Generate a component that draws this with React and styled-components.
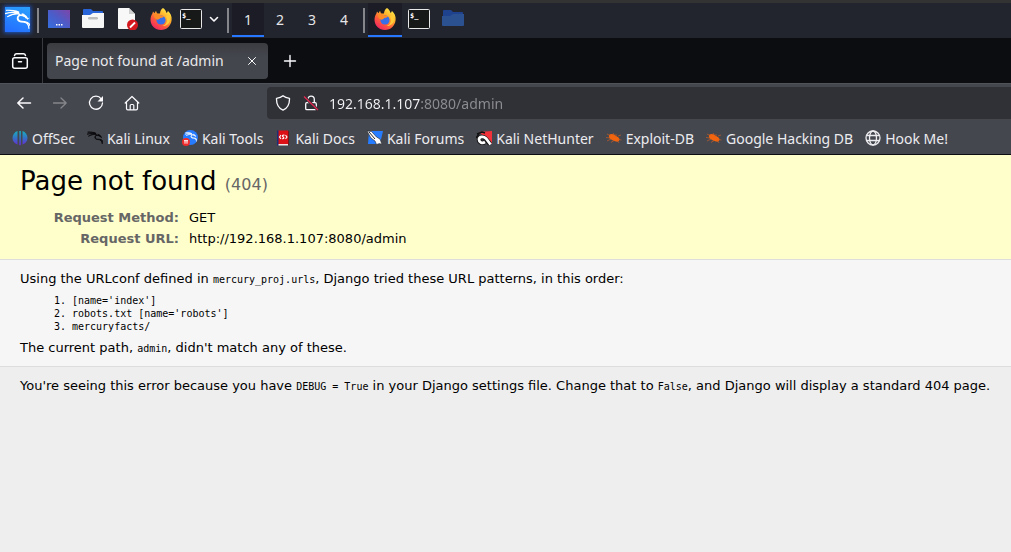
import React from "react";
import styled, { createGlobalStyle } from "styled-components";
import { SiKalilinux } from "react-icons/si";

const GlobalStyle = createGlobalStyle`
  * { box-sizing: border-box; }
  html { min-height: 100%; background: #eeeeee; }
  body { margin: 0; color: #000; font: 13px "DejaVu Sans", sans-serif; }
  button { border: 0; padding: 0; background: none; color: inherit; font: inherit; }
`;

const Chrome = styled.div`
  color: #fbfbfe;
  font: 14px "Noto Sans", sans-serif;
`;

const Panel = styled.header`
  display: flex;
  align-items: stretch;
  height: 38px;
  padding: 0 0 1px 4px;
  background: #23252e;
  border-top: 3px solid #333333;
`;

const Launcher = styled.button`
  display: flex;
  align-items: center;
  justify-content: center;
  width: ${(p) => p.$width || 34}px;
  background: ${(p) => (p.$active ? "#1b1c25" : "transparent")};
  border-bottom: 2px solid ${(p) => (p.$active ? "#2777ff" : "transparent")};
`;

const Workspace = styled(Launcher)`
  font-size: 14px;
  color: #e6e6e8;
`;

const Separator = styled.span`
  width: 2px;
  margin: 5px ${(p) => p.$right || 3}px 4px ${(p) => p.$left || 3}px;
  background: #85868b;
`;

const KaliTile = styled.span`
  display: flex;
  align-items: center;
  justify-content: center;
  width: 25px;
  height: 25px;
  color: #fff;
  background: linear-gradient(200deg, #2aa0ff, #246cff);
  box-shadow: 0 0 4px 1px #1d56c4;
`;

const Dragon = styled(SiKalilinux)`
  flex: none;
  stroke: currentColor;
  stroke-width: 1;
`;

const TabStrip = styled.div`
  display: flex;
  align-items: center;
  height: 45px;
  background: #0c0d11;
`;

const TabOverview = styled.button`
  display: flex;
  align-items: center;
  justify-content: center;
  align-self: stretch;
  width: 43px;
  padding-right: 3px;
  border-right: 1px solid #3a3b40;
`;

const Tab = styled.div`
  display: flex;
  align-items: center;
  justify-content: space-between;
  width: 221px;
  height: 36px;
  margin-left: 4px;
  padding: 0 8px;
  border-radius: 4px;
  background: linear-gradient(#3b3c40, #44464e 14px);
`;

const TabTitle = styled.button`
  color: #e8e8ea;
`;

const IconButton = styled.button`
  display: flex;
  align-items: center;
  justify-content: center;
  width: ${(p) => p.$width || 36}px;
  height: 32px;
  color: ${(p) => (p.$dim ? "#85868b" : "#fbfbfe")};
`;

const CloseButton = styled(IconButton)`
  width: 16px;
`;

const NewTab = styled(IconButton)`
  margin-left: 4px;
`;

const Toolbar = styled.nav`
  display: flex;
  align-items: center;
  height: 39px;
  padding-left: 6px;
  background: #45474f;
  border-top: 1px solid #51535b;
`;

const AddressBar = styled.label`
  display: flex;
  flex: 1;
  align-items: center;
  gap: 12px;
  height: 32px;
  margin-left: 117px;
  padding-left: 8px;
  border-radius: 4px 0 0 4px;
  background: #303136;
`;

const Address = styled.input`
  flex: 1;
  min-width: 0;
  margin-left: -2px;
  padding: 0;
  border: 0;
  outline: 0;
  font: 14px "Noto Sans", sans-serif;
  color: transparent;
  background: linear-gradient(to right, #f4f4f6 ${(p) => p.$hostWidth}px, #8d8e93 ${(p) => p.$hostWidth}px);
  background-clip: text;
  -webkit-background-clip: text;
`;

const Bookmarks = styled.nav`
  display: flex;
  gap: 12px;
  height: 33px;
  padding: 0 12px;
  overflow: hidden;
  background: #45474f;
  border-bottom: 1px solid #0c0d11;
`;

const Bookmark = styled.a`
  display: flex;
  align-items: center;
  gap: 4px;
  color: #ececef;
  text-decoration: none;
  white-space: nowrap;
`;

const Section = styled.section`
  padding: 10px 20px;
  background: ${(p) => p.$bg};
  border-bottom: ${(p) => (p.$last ? "0" : "1px solid #dddddd")};
`;

const Title = styled.h1`
  margin: 0 0 6px;
  font-size: 26px;
  font-weight: normal;
  line-height: 32px;
`;

const Status = styled.span`
  font-size: 16px;
  color: #666666;
`;

const Meta = styled.table`
  width: 100%;
  border-collapse: collapse;
  line-height: 15px;

  th, td { padding: 3px; vertical-align: top; text-align: left; }
  th { width: 166px; padding-right: 7px; color: #666666; text-align: right; }
`;

const Text = styled.p`
  margin: 0;
  line-height: 17px;
`;

const Code = styled.code`
  font: 10px "DejaVu Sans Mono", monospace;
`;

const Patterns = styled.ol`
  margin: 7px 0 6px;
  padding-left: 52px;
  font: 10px/13px "DejaVu Sans Mono", monospace;
`;

const Svg = ({ size = 16, box = 16, children, ...rest }) => (
  <svg width={size} height={size} viewBox={`0 0 ${box} ${box}`} fill="none" aria-hidden="true" {...rest}>
    {children}
  </svg>
);

const line = { stroke: "currentColor", strokeWidth: 1.3, strokeLinecap: "round", strokeLinejoin: "round" };

const DesktopIcon = () => (
  <Svg size={22} box={22}>
    <defs>
      <linearGradient id="desk" x1="0" y1="1" x2="1" y2="0">
        <stop offset="0" stopColor="#356fe0" /><stop offset=".5" stopColor="#4c5cc8" /><stop offset="1" stopColor="#7d45a8" />
      </linearGradient>
    </defs>
    <path d="M0 2h22v18H0z" fill="url(#desk)" />
    <path d="M8 16h1.5v1.500H8zM10.500 16H12v1.500h-1.500zM13 16h1.500v1.500H13z" fill="#fff" />
  </Svg>
);

const FilesIcon = () => (
  <Svg size={22} box={22}>
    <path d="M1 2q0-1 1-1h7l2 2h9q1 0 1 1v6H1z" fill="#2863d8" />
    <path d="M0 7h8l3-2h11v14q0 1-1 1H1q-1 0-1-1z" fill="#f6f6f6" />
    <rect x="6" y="9" width="10" height="2.500" rx="1.200" fill="#bdbdbd" />
  </Svg>
);

const DocumentIcon = () => (
  <Svg size={22} box={22}>
    <path d="M3 0h10l6 6v14q0 1-1 1H3q-1 0-1-1V1q0-1 1-1z" fill="#f8f8f8" />
    <path d="M13 0l6 6h-6z" fill="#cfcfcf" />
    <circle cx="16.500" cy="17" r="5.500" fill="#d3191f" />
    <path d="M14 19.500l5-5" stroke="#fff" strokeWidth="1.800" />
  </Svg>
);

const FirefoxIcon = ({ id }) => (
  <Svg size={22} box={22}>
    <defs>
      <linearGradient id={id} x1=".85" y1=".05" x2=".2" y2="1">
        <stop offset="0" stopColor="#fff04a" /><stop offset=".35" stopColor="#ffad2a" />
        <stop offset=".65" stopColor="#ff5a3c" /><stop offset="1" stopColor="#ee1f68" />
      </linearGradient>
    </defs>
    <path d="M13 0c2 1 3 3 3.500 5 1-.6 1.300-1.500 1.300-2.200C20.500 5 22 8.500 21.600 12 21 18 16.500 22 11 22 5 22 .5 17.500.5 11.800.5 9 1.300 7 2.500 5.200L3 3.500l1.500 1.700L6 2.700l1 2.700 3 .2C10 3.500 11 1 13 0z" fill={`url(#${id})`} />
    <circle cx="11" cy="12" r="4.600" fill="#386fe8" />
    <path d="M4 7c2-1.800 5-1.300 6.500.5L14 8c-.5 1.500-2 1.800-3.700 2-.6 1-1.800 1.300-2.800 1.800C5 11 4 9.500 4 7z" fill="#ff8b26" />
    <path d="M13 6c2 .6 4 2.700 4 6 0 3-2 5.500-5 6 5 .4 8-3 8-7 0-2-.7-4-2-5 0 2-1 2.500-2 2-.8-.3-1.500-1.300-3-2z" fill="#ffcc38" />
  </Svg>
);

const TerminalIcon = () => (
  <Svg size={22} box={22}>
    <rect x=".5" y="1.500" width="21" height="19" rx="1" fill="#171818" stroke="#e8e8e8" />
    <text x="2" y="10" fill="#fff" fontFamily="DejaVu Sans Mono, monospace" fontSize="7" fontWeight="bold">$_</text>
  </Svg>
);

const FolderIcon = () => (
  <Svg size={22} box={22}>
    <path d="M1 3q0-1 1-1h7l2 2h9q1 0 1 1v4H1z" fill="#1f428f" />
    <path d="M0 8h8l3-2h11v11q0 1-1 1H1q-1 0-1-1z" fill="#2b5191" />
  </Svg>
);

const OffSecIcon = () => (
  <Svg>
    <defs>
      <linearGradient id="offsec" x1="0" y1="0" x2="0" y2="1">
        <stop offset="0" stopColor="#18afbf" /><stop offset=".5" stopColor="#356fc5" /><stop offset="1" stopColor="#6b27d9" />
      </linearGradient>
    </defs>
    <path d="M5.500 1v13.500C2.500 13.500.5 11 .5 8s2-6 5-7zM7.300 1h1.600v14.500L8 14.700l-.7.800zM10.500 1c3 1 5 4 5 7s-2 5.500-5 6.500z" fill="url(#offsec)" />
  </Svg>
);

const ToolsIcon = () => (
  <Svg>
    <circle cx="8.500" cy="7.500" r="7.500" fill="#277bff" />
    <g transform="translate(3 1)" color="#fff"><Dragon size={12} /></g>
    <circle cx="4" cy="12" r="4" fill="#f02b2b" />
    <path d="M2 10.700h4M3 10.700v3M5 10.700v3" stroke="#fff" />
  </Svg>
);

const DocsIcon = () => (
  <Svg>
    <path d="M3 .5h10v14H3z" fill="#dc1015" />
    <path d="M2 .5h1.500v15H2z" fill="#1b2f78" />
    <path d="M3.500 14h9.500v1.500H3.500z" fill="#f0e4e4" />
    <path d="M13 1h1v14h-1z" fill="#76151a" />
    <path d="M6 5.200L4.500 7 6 8.800M10.500 5.200L12 7l-1.500 1.800M9.500 5.300C7.500 4.700 6.800 6 8 6.800s1.500 2.200-1 1.900" stroke="#fff" strokeWidth="1.100" />
  </Svg>
);

const ForumsIcon = () => (
  <Svg>
    <path d="M2 1h14l-3 13H1z" fill="#267cff" />
    <path d="M0 1l4.500.5 5 5.500 3.500 2 2 5.500-2.500-1-3 1L8 11 4 8z" fill="#fff" stroke="#222" strokeWidth=".6" />
    <path d="M2 2l6 7" stroke="#222" strokeWidth="1" />
  </Svg>
);

const NetHunterIcon = () => (
  <Svg>
    <path d="M3 2l13-1v13z" fill="#f2323b" />
    <path d="M1 4l5-2 3 1M0 8l3-4" stroke="#111" strokeWidth="1.400" />
    <path d="M14 14L9.500 8.500C7 6 3 7 3 9.500S6 14 9 12" stroke="#111" strokeWidth="4.500" />
    <path d="M14.500 14.500L10 8.500C7 5.500 3 7 3 9.500S6 14 9 12" stroke="#fff" strokeWidth="2.800" />
  </Svg>
);

const BugIcon = () => (
  <Svg>
    <path d="M3 5c2-2 5-1 7 1 2 1 3.500 2 3.500 3.500S12 12 10 11.500 3 9 3 7z" fill="#f2640d" />
    <path d="M1 4l4 2M0 7.500l4 .5M1 11l4-2M5 12.500l3-2M7 3l2 3M10 4v3M12 6l3-1M12.500 9.500l3 .5M11 10l2 3" stroke="#d9601b" strokeWidth=".6" />
  </Svg>
);

const GlobeIcon = () => (
  <Svg>
    <g stroke="currentColor" strokeWidth="1.300">
      <circle cx="8" cy="8" r="7" /><ellipse cx="8" cy="8" rx="3.500" ry="7" /><path d="M1.500 5.500h13M1.500 10.500h13" />
    </g>
  </Svg>
);

const bookmarks = [
  ["OffSec", <OffSecIcon />],
  ["Kali Linux", <Dragon size={16} color="#08080a" />],
  ["Kali Tools", <ToolsIcon />],
  ["Kali Docs", <DocsIcon />],
  ["Kali Forums", <ForumsIcon />],
  ["Kali NetHunter", <NetHunterIcon />],
  ["Exploit-DB", <BugIcon />],
  ["Google Hacking DB", <BugIcon />],
  ["Hook Me!", <GlobeIcon />],
];

export default function App() {
  return (
    <>
      <GlobalStyle />
      <Chrome>
        <Panel>
          <Launcher $width={26} aria-label="Applications"><KaliTile><Dragon size={25} /></KaliTile></Launcher>
          <Separator $left={7} />
          <Launcher aria-label="Show desktop"><DesktopIcon /></Launcher>
          <Launcher aria-label="Files"><FilesIcon /></Launcher>
          <Launcher aria-label="Text editor"><DocumentIcon /></Launcher>
          <Launcher aria-label="Firefox"><FirefoxIcon id="fox-launch" /></Launcher>
          <Launcher $width={26} aria-label="Terminal"><TerminalIcon /></Launcher>
          <Launcher $width={20} aria-label="More terminals">
            <Svg size={10} box={10}><path d="M1.500 3.500L5 7l3.500-3.500" {...line} strokeWidth="1.600" /></Svg>
          </Launcher>
          <Separator />
          <Workspace $width={32} $active>1</Workspace>
          <Workspace $width={32}>2</Workspace>
          <Workspace $width={32}>3</Workspace>
          <Workspace $width={32}>4</Workspace>
          <Separator />
          <Launcher $active aria-label="Firefox window"><FirefoxIcon id="fox-window" /></Launcher>
          <Launcher aria-label="Terminal window"><TerminalIcon /></Launcher>
          <Launcher aria-label="Files window"><FolderIcon /></Launcher>
        </Panel>

        <TabStrip>
          <TabOverview aria-label="Firefox View">
            <Svg size={18} box={18}>
              <rect x="1.700" y="5.700" width="14.600" height="10.600" rx="2" {...line} strokeWidth="1.500" />
              <path d="M3.500 3.500Q4 1.700 5.500 1.700h7q1.500 0 2 1.800M7.500 9.700h3" {...line} strokeWidth="1.500" />
            </Svg>
          </TabOverview>
          <Tab>
            <TabTitle>Page not found at /admin</TabTitle>
            <CloseButton aria-label="Close tab">
              <Svg><path d="M4.500 4.500l7 7M11.500 4.500l-7 7" {...line} strokeWidth="1" /></Svg>
            </CloseButton>
          </Tab>
          <NewTab aria-label="New tab">
            <Svg><path d="M8 2.500v11M2.500 8h11" {...line} strokeWidth="1.400" /></Svg>
          </NewTab>
        </TabStrip>

        <Toolbar aria-label="Navigation">
          <IconButton aria-label="Back"><Svg><path d="M14.500 8H1.800M7 3L1.800 8 7 13" {...line} strokeWidth="1.500" /></Svg></IconButton>
          <IconButton $dim aria-label="Forward"><Svg><path d="M1.500 8h12.700M9 3l5.200 5L9 13" {...line} /></Svg></IconButton>
          <IconButton aria-label="Reload">
            <Svg><path d="M13.200 3.800A6.500 6.500 0 1 0 14.500 8" {...line} strokeWidth="1.300" /><path d="M15 1v5.500H9.500z" fill="currentColor" /></Svg>
          </IconButton>
          <IconButton aria-label="Home">
            <Svg><path d="M1.200 8L8 1.500 14.800 8M2.500 7.500v6q0 1.300 1.300 1.300h8.400q1.300 0 1.300-1.300v-6M6.200 14.500v-4q0-1 1-1h1.600q1 0 1 1v4" {...line} strokeWidth="1.200" /></Svg>
          </IconButton>
          <AddressBar aria-label="Address">
            <Svg><path d="M8 .8c1.800 1.600 4 2.200 6.500 2.500C14.700 9 12.500 13.300 8 15.200 3.500 13.300 1.300 9 1.500 3.300 4 3 6.200 2.400 8 .8z" {...line} /></Svg>
            <Svg>
              <rect x="2.700" y="7.700" width="10.600" height="7" rx="1.200" {...line} />
              <path d="M4.900 7V4.300a3.200 3.200 0 0 1 6.400 0V7" {...line} />
              <path d="M1 1.500l14 13.500" stroke="#303136" strokeWidth="3" />
              <path d="M1 1.500l14 13.500" stroke="#e22850" strokeWidth="1.300" />
            </Svg>
            <Address $hostWidth={91} defaultValue="192.168.1.107:8080/admin" />
          </AddressBar>
        </Toolbar>

        <Bookmarks aria-label="Bookmarks">
          {bookmarks.map(([label, icon]) => (
            <Bookmark href="#" key={label}>{icon}{label}</Bookmark>
          ))}
        </Bookmarks>
      </Chrome>

      <main>
        <Section $bg="#ffffcc">
          <Title>Page not found <Status>(404)</Status></Title>
          <Meta>
            <tbody>
              <tr><th scope="row">Request Method:</th><td>GET</td></tr>
              <tr><th scope="row">Request URL:</th><td>http://192.168.1.107:8080/admin</td></tr>
            </tbody>
          </Meta>
        </Section>
        <Section $bg="#f6f6f6">
          <Text>Using the URLconf defined in <Code>mercury_proj.urls</Code>, Django tried these URL patterns, in this order:</Text>
          <Patterns>
            <li>[name='index']</li>
            <li>robots.txt [name='robots']</li>
            <li>mercuryfacts/</li>
          </Patterns>
          <Text>The current path, <Code>admin</Code>, didn't match any of these.</Text>
        </Section>
        <Section $bg="#eeeeee" $last>
          <Text>You're seeing this error because you have <Code>DEBUG = True</Code> in your Django settings file. Change that to <Code>False</Code>, and Django will display a standard 404 page.</Text>
        </Section>
      </main>
    </>
  );
}
